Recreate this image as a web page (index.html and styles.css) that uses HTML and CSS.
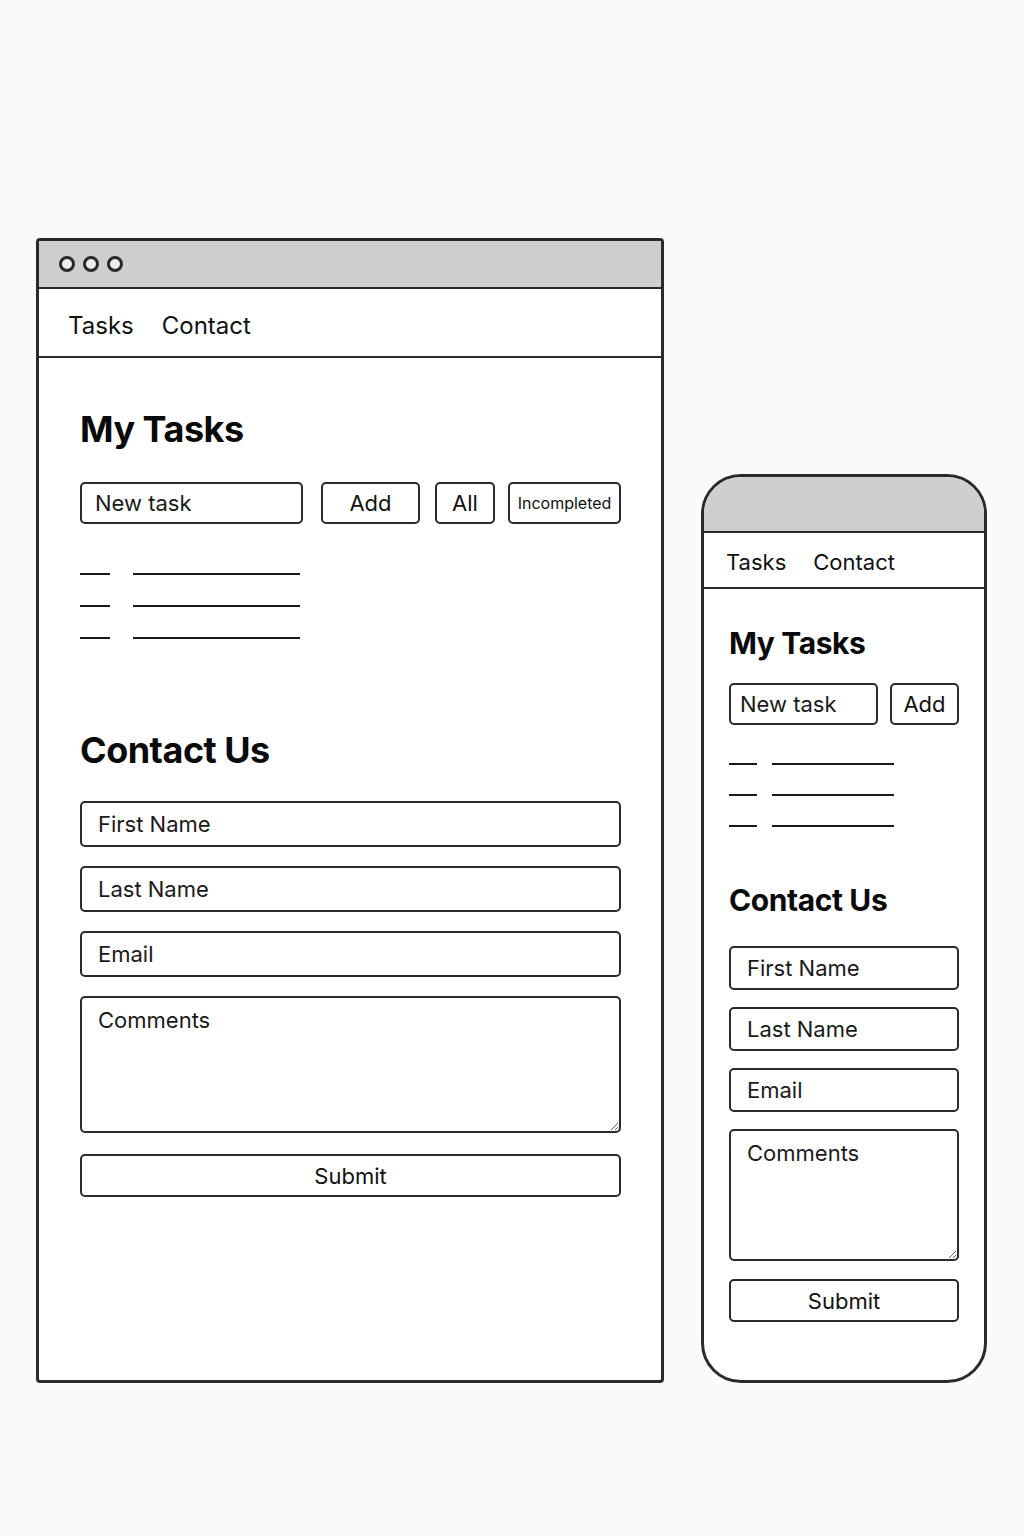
FILE: index.html
```html
<!DOCTYPE html>
<html lang="en">
<head>
<meta charset="utf-8">
<title>Tasks wireframe</title>
<link rel="stylesheet" href="styles.css">
</head>
<body>
<div class="stage">
  <div class="desktop">
    <div class="titlebar">
      <span class="dot"></span><span class="dot"></span><span class="dot"></span>
    </div>
    <nav class="nav">
      <a class="nav-link">Tasks</a>
      <a class="nav-link">Contact</a>
    </nav>
    <main class="content">
      <h1 class="heading heading-tasks">My Tasks</h1>
      <div class="task-row">
        <input class="field field-task" type="text" placeholder="New task">
        <button class="btn btn-add">Add</button>
        <button class="btn btn-all">All</button>
        <button class="btn btn-inc">Incompleted</button>
      </div>
      <ul class="task-list">
        <li class="task"><span class="bar-short"></span><span class="bar-long"></span></li>
        <li class="task"><span class="bar-short"></span><span class="bar-long"></span></li>
        <li class="task"><span class="bar-short"></span><span class="bar-long"></span></li>
      </ul>
      <h1 class="heading heading-contact">Contact Us</h1>
      <form class="form">
        <input class="field" type="text" placeholder="First Name">
        <input class="field" type="text" placeholder="Last Name">
        <input class="field" type="email" placeholder="Email">
        <textarea class="field area" placeholder="Comments"></textarea>
        <button class="btn btn-submit" type="button">Submit</button>
      </form>
    </main>
  </div>

  <div class="phone">
    <div class="phone-top"></div>
    <nav class="nav nav-phone">
      <a class="nav-link">Tasks</a>
      <a class="nav-link">Contact</a>
    </nav>
    <main class="content content-phone">
      <h1 class="heading heading-tasks">My Tasks</h1>
      <div class="task-row">
        <input class="field field-task" type="text" placeholder="New task">
        <button class="btn btn-add">Add</button>
      </div>
      <ul class="task-list">
        <li class="task"><span class="bar-short"></span><span class="bar-long"></span></li>
        <li class="task"><span class="bar-short"></span><span class="bar-long"></span></li>
        <li class="task"><span class="bar-short"></span><span class="bar-long"></span></li>
      </ul>
      <h1 class="heading heading-contact">Contact Us</h1>
      <form class="form">
        <input class="field" type="text" placeholder="First Name">
        <input class="field" type="text" placeholder="Last Name">
        <input class="field" type="email" placeholder="Email">
        <textarea class="field area" placeholder="Comments"></textarea>
        <button class="btn btn-submit" type="button">Submit</button>
      </form>
    </main>
  </div>
</div>
</body>
</html>
```

FILE: styles.css
```css
* { box-sizing: border-box; }

html, body {
  margin: 0;
  padding: 0;
  background: #fafafa;
  font-family: Inter, "Noto Sans", "Liberation Sans", sans-serif;
  color: #111;
}

.stage {
  display: flex;
  align-items: flex-start;
  padding: 238px 0 0 36px;
  gap: 37px;
}

/* ---------- desktop frame ---------- */
.desktop {
  width: 628px;
  height: 1145px;
  border: 3px solid #2a2a2a;
  border-radius: 4px;
  background: #fff;
  display: flex;
  flex-direction: column;
  overflow: hidden;
}

.titlebar {
  height: 48px;
  background: #cfcfcf;
  border-bottom: 2px solid #2a2a2a;
  display: flex;
  align-items: center;
  gap: 8px;
  padding-left: 20px;
  flex-shrink: 0;
}

.dot {
  width: 16px;
  height: 16px;
  border-radius: 50%;
  border: 3px solid #2a2a2a;
  background: #ececec;
}

.nav {
  height: 69px;
  border-bottom: 2px solid #2a2a2a;
  display: flex;
  align-items: center;
  gap: 28px;
  padding: 5px 0 0 29px;
  flex-shrink: 0;
  background: #fff;
}

.nav-link {
  font-size: 24px;
  color: #111;
  text-decoration: none;
}

.content {
  padding: 50px 40px 0 41px;
}

.heading {
  margin: 0;
  font-size: 36px;
  line-height: 1.2;
  font-weight: 700;
  color: #0a0a0a;
  letter-spacing: -0.5px;
}

.heading-contact { margin-top: 75px; }

.task-row {
  margin-top: 31px;
  display: flex;
  height: 42px;
}

.field {
  font-family: inherit;
  font-size: 22px;
  color: #111;
  border: 2px solid #2a2a2a;
  border-radius: 5px;
  background: #fff;
  outline: none;
  padding: 0 0 0 16px;
  margin: 0;
}

.field::placeholder { color: #1a1a1a; opacity: 1; }

.field-task {
  width: 223px;
  height: 42px;
  padding-left: 13px;
}

.btn {
  font-family: inherit;
  font-size: 22px;
  color: #111;
  background: #fff;
  border: 2px solid #2a2a2a;
  border-radius: 5px;
  padding: 0;
  margin: 0;
  height: 42px;
}

.btn-add { width: 99px; margin-left: 18px; }
.btn-all { width: 60px; margin-left: 15px; }
.btn-inc { width: 113px; margin-left: 13px; font-size: 16px; }

.task-list {
  list-style: none;
  margin: 34px 0 0 0;
  padding: 0;
}

.task {
  height: 32px;
  display: flex;
  align-items: center;
  gap: 23px;
}

.bar-short {
  width: 30px;
  height: 2px;
  background: #1a1a1a;
}

.bar-long {
  width: 167px;
  height: 2px;
  background: #1a1a1a;
}

.form {
  margin-top: 29px;
  display: flex;
  flex-direction: column;
  gap: 19px;
}

.form .field {
  height: 46px;
  width: 100%;
}

.form .area {
  height: 137px;
  padding-top: 9px;
  resize: vertical;
  display: block;
}

.btn-submit {
  width: 100%;
  height: 43px;
  margin-top: 2px;
}

/* ---------- phone frame ---------- */
.phone {
  margin-top: 236px;
  width: 286px;
  height: 909px;
  border: 3px solid #2a2a2a;
  border-radius: 40px;
  background: #fff;
  overflow: hidden;
  display: flex;
  flex-direction: column;
}

.phone-top {
  height: 56px;
  background: #cfcfcf;
  border-bottom: 2px solid #2a2a2a;
  flex-shrink: 0;
}

.nav-phone {
  height: 56px;
  gap: 27px;
  padding: 4px 0 0 22px;
}

.nav-phone .nav-link { font-size: 22px; }

.content-phone {
  padding: 36px 25px 0 25px;
}

.content-phone .heading { font-size: 30px; letter-spacing: -0.4px; }

.content-phone .task-row { margin-top: 22px; }

.content-phone .field-task {
  width: 149px;
  padding-left: 9px;
}

.content-phone .btn-add {
  width: 70px;
  margin-left: 12px;
}

.content-phone .task-list { margin-top: 23px; }
.content-phone .task { height: 31px; gap: 15px; }
.content-phone .bar-short { width: 28px; }
.content-phone .bar-long { width: 122px; }

.content-phone .heading-contact { margin-top: 41px; }

.content-phone .form {
  margin-top: 28px;
  gap: 17px;
}

.content-phone .form .field { height: 44px; }
.content-phone .form .area { height: 132px; }
.content-phone .btn-submit { height: 43px; margin-top: 1px; }
```
